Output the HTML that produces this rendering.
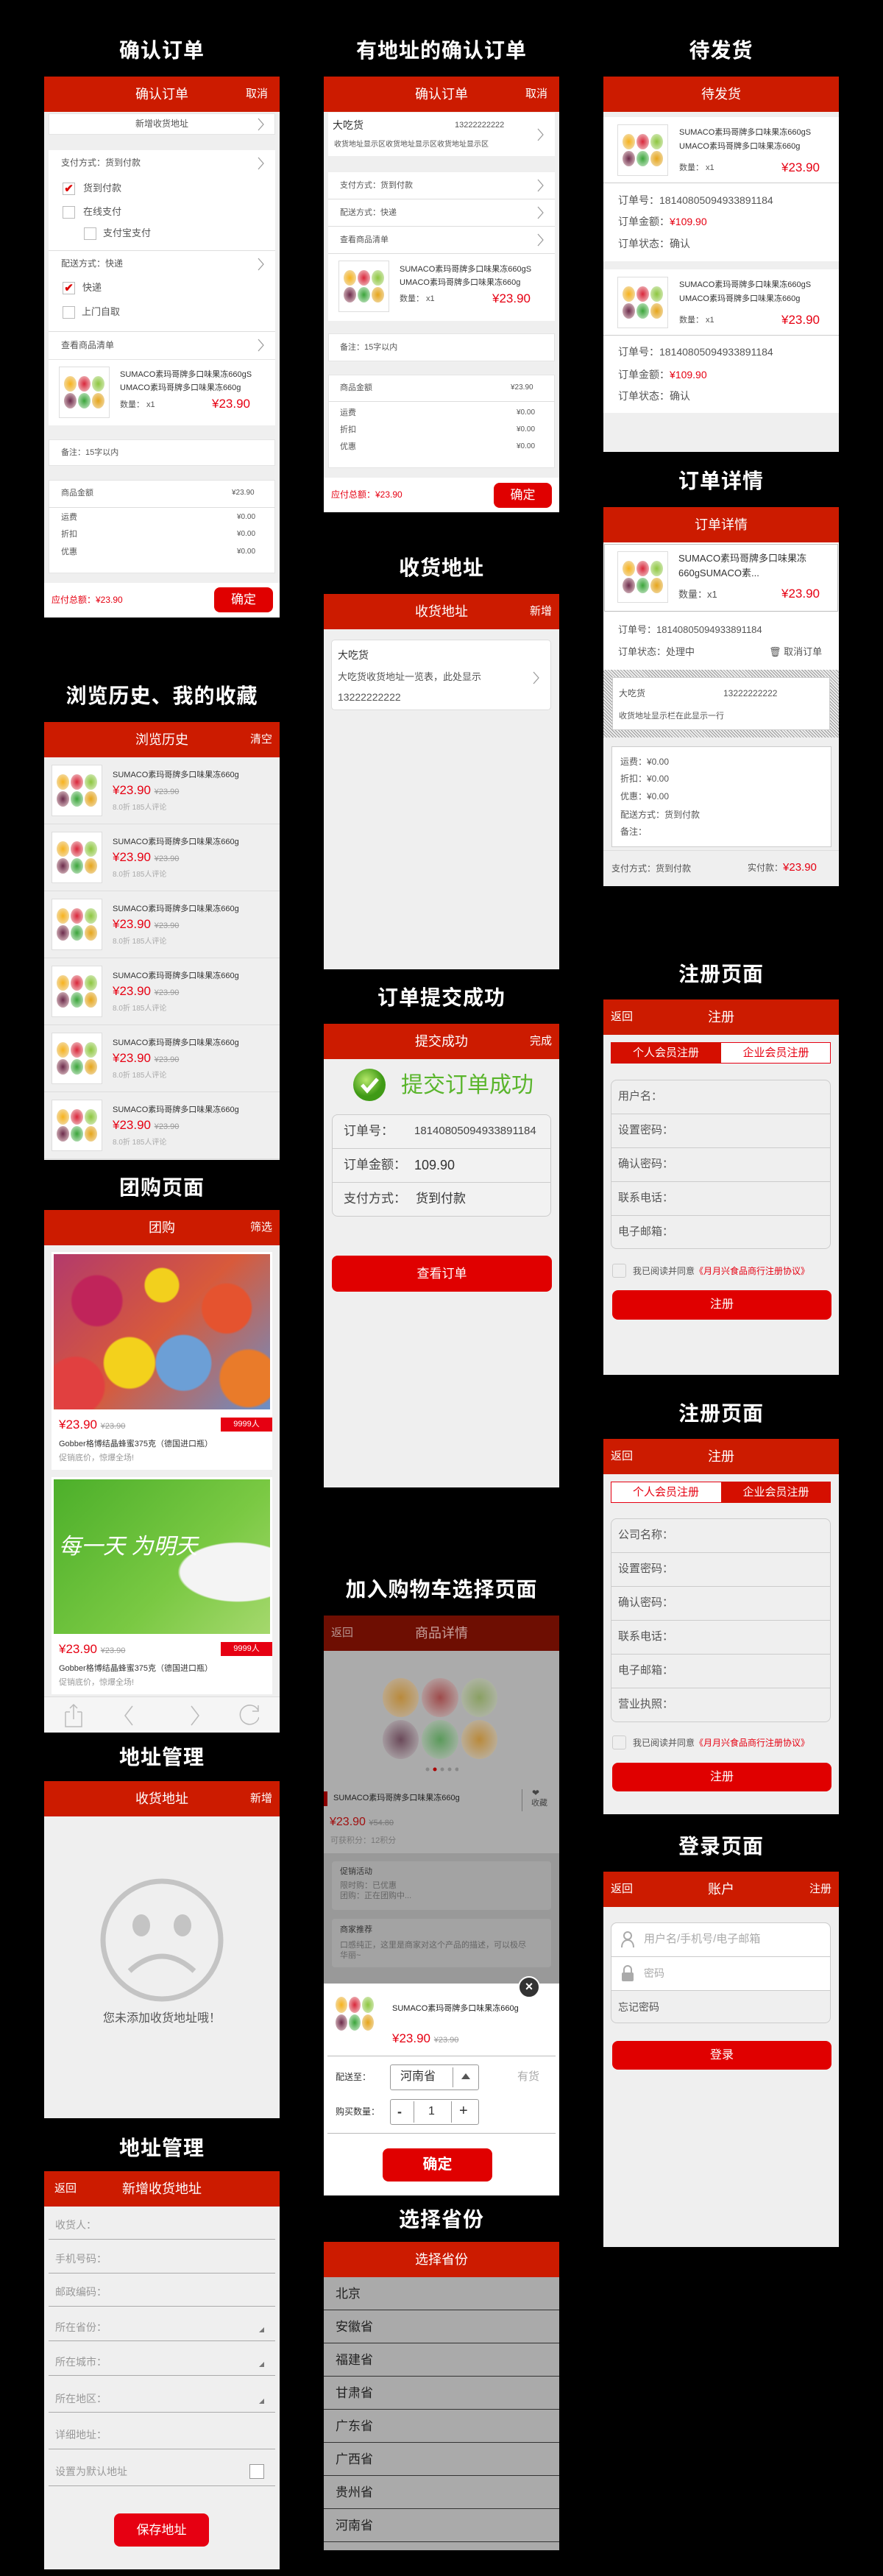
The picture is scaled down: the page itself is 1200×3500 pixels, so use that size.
<!DOCTYPE html>
<html><head><meta charset="utf-8">
<style>
*{margin:0;padding:0;box-sizing:border-box}
body{width:1200px;height:3500px;background:#000;position:relative;overflow:hidden;font-family:"Liberation Sans","Noto Sans CJK SC",sans-serif;color:#333}
.ti{position:absolute;width:360px;text-align:center;color:#fff;font-size:28px;font-weight:bold;line-height:36px;letter-spacing:1px}
.p{position:absolute;width:320px;background:#efefef;overflow:hidden}
.p>*{position:absolute}
.h{left:0;top:0;width:320px;height:48px;background:#cc1b00;color:#fff}
.h .c{position:absolute;left:0;width:320px;text-align:center;font-size:18px;line-height:48px}
.h .r{position:absolute;right:10px;font-size:15px;line-height:48px}
.h .l{position:absolute;left:10px;font-size:15px;line-height:48px}
.w{background:#fff}
.t{line-height:20px;white-space:nowrap;font-size:12px;color:#555}
.ar{width:9px;height:18px}
.cb{width:17px;height:17px;border:1px solid #bbb;background:#fff;color:#d00;font-size:15px;line-height:15px;text-align:center;font-weight:bold}
.th{width:69px;height:70px;background:#fff;border:1px solid #ddd;display:grid;grid-template-columns:repeat(3,1fr);padding:12px 6px;gap:2px}
.th i{border-radius:50%;display:block}
.th i:nth-child(1){background:radial-gradient(#f7b21c,#f1e5c8)}
.th i:nth-child(2){background:radial-gradient(#d9263a,#f3d8d8)}
.th i:nth-child(3){background:radial-gradient(#8dc63f,#e2f0d0)}
.th i:nth-child(4){background:radial-gradient(#6b2a4a,#eed7d7)}
.th i:nth-child(5){background:radial-gradient(#3aa43a,#d8eed8)}
.th i:nth-child(6){background:radial-gradient(#e6a51a,#f2e2be)}
.red{color:#e60012}
.btn{background:#e00000;color:#fff;text-align:center;border-radius:8px}
.ln{height:1px;background:#ddd}
.s{text-decoration:line-through;color:#999}
</style></head><body>

<div class="ti" style="left:40px;top:51px">确认订单</div>
<div class="ti" style="left:420px;top:51px">有地址的确认订单</div>
<div class="ti" style="left:800px;top:51px">待发货</div>
<div class="ti" style="left:800px;top:636px">订单详情</div>
<div class="ti" style="left:420px;top:754px">收货地址</div>
<div class="ti" style="left:40px;top:928px">浏览历史、我的收藏</div>
<div class="ti" style="left:800px;top:1306px">注册页面</div>
<div class="ti" style="left:420px;top:1338px">订单提交成功</div>
<div class="ti" style="left:40px;top:1596px">团购页面</div>
<div class="ti" style="left:800px;top:1903px">注册页面</div>
<div class="ti" style="left:420px;top:2142px">加入购物车选择页面</div>
<div class="ti" style="left:40px;top:2370px">地址管理</div>
<div class="ti" style="left:800px;top:2491px">登录页面</div>
<div class="ti" style="left:40px;top:2901px">地址管理</div>
<div class="ti" style="left:420px;top:2998px">选择省份</div>

<div class="p" style="left:60px;top:104px;height:735px">
 <div class="h"><div class="c">确认订单</div><div class="r" style="right:16px">取消</div></div>
 <div class="w" style="left:6px;top:50px;width:308px;height:29px;border:1px solid #e4e4e4"></div>
 <div class="t" style="left:0;width:320px;text-align:center;top:54px">新增收货地址</div>
 <svg class="ar" style="left:290px;top:56px"><path d="M1 1l7 8-7 8" fill="none" stroke="#999" stroke-width="1.2"/></svg>
 <div class="w" style="left:6px;top:100px;width:308px;height:290px"></div>
 <div class="t" style="left:23px;top:107px">支付方式：货到付款</div>
 <svg class="ar" style="left:290px;top:109px"><path d="M1 1l7 8-7 8" fill="none" stroke="#999" stroke-width="1.2"/></svg>
 <div class="cb" style="left:25px;top:144px">✔</div><div class="t" style="left:53px;top:142px;font-size:13px">货到付款</div>
 <div class="cb" style="left:25px;top:176px"></div><div class="t" style="left:53px;top:174px;font-size:13px">在线支付</div>
 <div class="cb" style="left:54px;top:205px"></div><div class="t" style="left:80px;top:203px;font-size:13px">支付宝支付</div>
 <div class="ln" style="left:6px;top:236px;width:308px"></div>
 <div class="t" style="left:23px;top:244px">配送方式：快递</div>
 <svg class="ar" style="left:290px;top:246px"><path d="M1 1l7 8-7 8" fill="none" stroke="#999" stroke-width="1.2"/></svg>
 <div class="cb" style="left:25px;top:279px">✔</div><div class="t" style="left:52px;top:277px;font-size:13px">快递</div>
 <div class="cb" style="left:25px;top:312px"></div><div class="t" style="left:51px;top:310px;font-size:13px">上门自取</div>
 <div class="ln" style="left:6px;top:346px;width:308px"></div>
 <div class="t" style="left:23px;top:355px">查看商品清单</div>
 <svg class="ar" style="left:290px;top:356px"><path d="M1 1l7 8-7 8" fill="none" stroke="#999" stroke-width="1.2"/></svg>
 <div class="w" style="left:6px;top:384px;width:308px;height:90px;border-top:1px solid #e4e4e4"></div>
 <div class="th" style="left:20px;top:394px"><i></i><i></i><i></i><i></i><i></i><i></i></div>
 <div class="t" style="left:103px;top:395px;font-size:11px;color:#333">SUMACO素玛哥牌多口味果冻660gS</div>
 <div class="t" style="left:103px;top:413px;font-size:11px;color:#333">UMACO素玛哥牌多口味果冻660g</div>
 <div class="t" style="left:103px;top:436px;font-size:11px">数量： x1</div>
 <div class="t red" style="left:228px;top:435px;font-size:17px">¥23.90</div>
 <div class="w" style="left:6px;top:493px;width:308px;height:36px;border:1px solid #e4e4e4"></div>
 <div class="t" style="left:23px;top:501px;font-size:11px">备注：15字以内</div>
 <div class="w" style="left:6px;top:548px;width:308px;height:127px;border:1px solid #e4e4e4"></div>
 <div class="t" style="left:23px;top:556px;font-size:11px">商品金额</div><div class="t" style="left:255px;top:556px;font-size:10px">¥23.90</div>
 <div class="ln" style="left:6px;top:585px;width:308px"></div>
 <div class="t" style="left:23px;top:589px;font-size:11px">运费</div><div class="t" style="left:262px;top:589px;font-size:10px">¥0.00</div>
 <div class="t" style="left:23px;top:612px;font-size:11px">折扣</div><div class="t" style="left:262px;top:612px;font-size:10px">¥0.00</div>
 <div class="t" style="left:23px;top:636px;font-size:11px">优惠</div><div class="t" style="left:262px;top:636px;font-size:10px">¥0.00</div>
 <div class="w" style="left:0;top:688px;width:320px;height:47px"></div>
 <div class="t red" style="left:10px;top:701px;font-size:12px">应付总额：¥23.90</div>
 <div class="btn" style="left:231px;top:694px;width:80px;height:34px;line-height:34px;font-size:17px">确定</div>
</div>

<div class="p" style="left:440px;top:104px;height:592px">
 <div class="h"><div class="c">确认订单</div><div class="r" style="right:16px">取消</div></div>
 <div class="w" style="left:6px;top:49px;width:308px;height:59px"></div>
 <div class="t" style="left:12px;top:56px;font-size:14px;color:#333">大吃货</div>
 <div class="t" style="left:178px;top:56px;font-size:11px">13222222222</div>
 <div class="t" style="left:14px;top:83px;font-size:10px">收货地址显示区收货地址显示区收货地址显示区</div>
 <svg class="ar" style="left:290px;top:70px"><path d="M1 1l7 8-7 8" fill="none" stroke="#999" stroke-width="1.2"/></svg>
 <div class="w" style="left:6px;top:130px;width:308px;height:202px"></div>
 <div class="t" style="left:22px;top:138px;font-size:11px">支付方式：货到付款</div>
 <svg class="ar" style="left:290px;top:139px"><path d="M1 1l7 8-7 8" fill="none" stroke="#999" stroke-width="1.2"/></svg>
 <div class="ln" style="left:6px;top:166px;width:308px"></div>
 <div class="t" style="left:22px;top:175px;font-size:11px">配送方式：快递</div>
 <svg class="ar" style="left:290px;top:176px"><path d="M1 1l7 8-7 8" fill="none" stroke="#999" stroke-width="1.2"/></svg>
 <div class="ln" style="left:6px;top:203px;width:308px"></div>
 <div class="t" style="left:22px;top:212px;font-size:11px">查看商品清单</div>
 <svg class="ar" style="left:290px;top:213px"><path d="M1 1l7 8-7 8" fill="none" stroke="#999" stroke-width="1.2"/></svg>
 <div class="ln" style="left:6px;top:240px;width:308px"></div>
 <div class="th" style="left:20px;top:250px"><i></i><i></i><i></i><i></i><i></i><i></i></div>
 <div class="t" style="left:103px;top:252px;font-size:11px;color:#333">SUMACO素玛哥牌多口味果冻660gS</div>
 <div class="t" style="left:103px;top:270px;font-size:11px;color:#333">UMACO素玛哥牌多口味果冻660g</div>
 <div class="t" style="left:103px;top:292px;font-size:11px">数量： x1</div>
 <div class="t red" style="left:229px;top:292px;font-size:17px">¥23.90</div>
 <div class="w" style="left:6px;top:349px;width:308px;height:38px;border:1px solid #e4e4e4"></div>
 <div class="t" style="left:22px;top:358px;font-size:11px">备注：15字以内</div>
 <div class="w" style="left:6px;top:405px;width:308px;height:127px;border:1px solid #e4e4e4"></div>
 <div class="t" style="left:22px;top:413px;font-size:11px">商品金额</div><div class="t" style="left:254px;top:413px;font-size:10px">¥23.90</div>
 <div class="ln" style="left:6px;top:441px;width:308px"></div>
 <div class="t" style="left:22px;top:447px;font-size:11px">运费</div><div class="t" style="left:262px;top:447px;font-size:10px">¥0.00</div>
 <div class="t" style="left:22px;top:470px;font-size:11px">折扣</div><div class="t" style="left:262px;top:470px;font-size:10px">¥0.00</div>
 <div class="t" style="left:22px;top:493px;font-size:11px">优惠</div><div class="t" style="left:262px;top:493px;font-size:10px">¥0.00</div>
 <div class="w" style="left:0;top:545px;width:320px;height:47px"></div>
 <div class="t red" style="left:10px;top:558px;font-size:12px">应付总额：¥23.90</div>
 <div class="btn" style="left:231px;top:552px;width:79px;height:34px;line-height:34px;font-size:17px">确定</div>
</div>

<div class="p" style="left:820px;top:104px;height:510px">
 <div class="h"><div class="c">待发货</div></div>
 <div class="w" style="left:0;top:55px;width:320px;height:196px"></div>
 <div class="th" style="left:19px;top:65px"><i></i><i></i><i></i><i></i><i></i><i></i></div>
 <div class="t" style="left:103px;top:66px;font-size:11px;color:#333">SUMACO素玛哥牌多口味果冻660gS</div>
 <div class="t" style="left:103px;top:85px;font-size:11px;color:#333">UMACO素玛哥牌多口味果冻660g</div>
 <div class="t" style="left:103px;top:114px;font-size:11px">数量： x1</div>
 <div class="t red" style="left:242px;top:114px;font-size:17px">¥23.90</div>
 <div class="ln" style="left:0;top:144px;width:320px;background:#ccc"></div>
 <div class="t" style="left:20px;top:158px;font-size:14px">订单号：18140805094933891184</div>
 <div class="t" style="left:20px;top:187px;font-size:14px">订单金额：<span class="red">¥109.90</span></div>
 <div class="t" style="left:20px;top:217px;font-size:14px">订单状态：确认</div>
 <div class="w" style="left:0;top:262px;width:320px;height:195px"></div>
 <div class="th" style="left:19px;top:272px"><i></i><i></i><i></i><i></i><i></i><i></i></div>
 <div class="t" style="left:103px;top:273px;font-size:11px;color:#333">SUMACO素玛哥牌多口味果冻660gS</div>
 <div class="t" style="left:103px;top:292px;font-size:11px;color:#333">UMACO素玛哥牌多口味果冻660g</div>
 <div class="t" style="left:103px;top:321px;font-size:11px">数量： x1</div>
 <div class="t red" style="left:242px;top:321px;font-size:17px">¥23.90</div>
 <div class="ln" style="left:0;top:351px;width:320px;background:#ccc"></div>
 <div class="t" style="left:20px;top:364px;font-size:14px">订单号：18140805094933891184</div>
 <div class="t" style="left:20px;top:395px;font-size:14px">订单金额：<span class="red">¥109.90</span></div>
 <div class="t" style="left:20px;top:424px;font-size:14px">订单状态：确认</div>
</div>

<div class="p" style="left:820px;top:689px;height:515px;background:#fff">
 <div class="h"><div class="c">订单详情</div></div>
 <div style="left:1px;top:50px;width:318px;height:92px;border:1px solid #bbb"></div>
 <div class="th" style="left:19px;top:60px"><i></i><i></i><i></i><i></i><i></i><i></i></div>
 <div class="t" style="left:102px;top:60px;font-size:13px;color:#333">SUMACO素玛哥牌多口味果冻</div>
 <div class="t" style="left:102px;top:80px;font-size:13px;color:#333">660gSUMACO素...</div>
 <div class="t" style="left:102px;top:109px;font-size:13px">数量：x1</div>
 <div class="t red" style="left:242px;top:108px;font-size:17px">¥23.90</div>
 <div class="t" style="left:20px;top:157px;font-size:13px">订单号：18140805094933891184</div>
 <div class="t" style="left:20px;top:187px;font-size:13px">订单状态：处理中</div>
 <div class="t" style="left:225px;top:187px;font-size:13px">🗑 取消订单</div>
 <div style="left:0;top:221px;width:320px;height:92px;background:repeating-linear-gradient(45deg,#999 0 1px,#eee 1px 3px)"></div>
 <div class="w" style="left:12px;top:231px;width:296px;height:72px;border:1px solid #ccc"></div>
 <div class="t" style="left:21px;top:243px;font-size:12px">大吃货</div>
 <div class="t" style="left:163px;top:243px;font-size:12px">13222222222</div>
 <div class="t" style="left:21px;top:274px;font-size:11px">收货地址显示栏在此显示一行</div>
 <div style="left:0;top:313px;width:320px;height:202px;background:#efefef"></div>
 <div class="w" style="left:11px;top:325px;width:299px;height:137px;border:1px solid #ccc"></div>
 <div class="t" style="left:23px;top:336px;font-size:12px">运费：¥0.00</div>
 <div class="t" style="left:23px;top:359px;font-size:12px">折扣：¥0.00</div>
 <div class="t" style="left:23px;top:383px;font-size:12px">优惠：¥0.00</div>
 <div class="t" style="left:23px;top:408px;font-size:12px">配送方式：货到付款</div>
 <div class="t" style="left:23px;top:431px;font-size:12px">备注：</div>
 <div class="ln" style="left:0;top:466px;width:320px"></div>
 <div class="t" style="left:11px;top:481px;font-size:12px">支付方式：货到付款</div>
 <div class="t" style="left:196px;top:480px;font-size:12px">实付款：<span class="red" style="font-size:15px">¥23.90</span></div>
</div>

<div class="p" style="left:440px;top:807px;height:510px">
 <div class="h"><div class="c">收货地址</div><div class="r">新增</div></div>
 <div class="w" style="left:10px;top:62px;width:299px;height:96px;border:1px solid #ddd;border-radius:5px"></div>
 <div class="t" style="left:19px;top:73px;font-size:14px;color:#333">大吃货</div>
 <div class="t" style="left:19px;top:103px;font-size:13px">大吃货收货地址一览表，此处显示</div>
 <div class="t" style="left:19px;top:130px;font-size:14px">13222222222</div>
 <svg class="ar" style="left:284px;top:105px"><path d="M1 1l7 8-7 8" fill="none" stroke="#999" stroke-width="1.2"/></svg>
</div>

<div class="p" style="left:60px;top:981px;height:595px">
 <div class="h"><div class="c">浏览历史</div><div class="r">清空</div></div>
</div>

<div class="p" style="left:60px;top:1644px;height:710px">
 <div class="h"><div class="c">团购</div><div class="r">筛选</div></div>
 <div class="w" style="left:10px;top:57px;width:300px;height:296px"></div>
 <div style="left:13px;top:60px;width:294px;height:211px;background:radial-gradient(circle at 20% 30%,#c0245a 0 12%,transparent 13%),radial-gradient(circle at 50% 20%,#f2d01d 0 10%,transparent 11%),radial-gradient(circle at 80% 35%,#e5532f 0 12%,transparent 13%),radial-gradient(circle at 35% 70%,#f3d11c 0 14%,transparent 15%),radial-gradient(circle at 60% 70%,#6c9fd6 0 16%,transparent 17%),radial-gradient(circle at 90% 80%,#e97b2a 0 12%,transparent 13%),radial-gradient(circle at 10% 85%,#e14040 0 12%,transparent 13%),linear-gradient(135deg,#b33a6b,#d85a3b 50%,#6a8fc7)"></div>
 <div class="t red" style="left:20px;top:282px;font-size:17px">¥23.90 <span class="s" style="font-size:11px">¥23.90</span></div>
 <div style="left:240px;top:282px;width:70px;height:19px;background:#e60012;color:#fff;font-size:11px;line-height:19px;text-align:center">9999人</div>
 <div class="t" style="left:20px;top:308px;font-size:11px;color:#333">Gobber格博结晶蜂蜜375克（德国进口瓶）</div>
 <div class="t" style="left:20px;top:327px;font-size:11px;color:#999">促销底价，惊爆全场!</div>
 <div class="w" style="left:10px;top:363px;width:300px;height:295px"></div>
 <div style="left:13px;top:366px;width:294px;height:210px;background:radial-gradient(ellipse at 85% 60%,#f4f4f4 0 22%,transparent 23%),linear-gradient(135deg,#4caf2a,#7ac943 60%,#a5d86d)"></div>
 <div class="t" style="left:20px;top:440px;font-size:30px;color:#fff;line-height:36px;font-style:italic">每一天 为明天</div>
 <div class="t red" style="left:20px;top:587px;font-size:17px">¥23.90 <span class="s" style="font-size:11px">¥23.90</span></div>
 <div style="left:240px;top:587px;width:70px;height:19px;background:#e60012;color:#fff;font-size:11px;line-height:19px;text-align:center">9999人</div>
 <div class="t" style="left:20px;top:613px;font-size:11px;color:#333">Gobber格博结晶蜂蜜375克（德国进口瓶）</div>
 <div class="t" style="left:20px;top:632px;font-size:11px;color:#999">促销底价，惊爆全场!</div>
 <div style="left:0;top:661px;width:320px;height:49px;background:#f5f5f5;border-top:1px solid #ddd"></div>
 <svg style="left:28px;top:670px" width="264" height="34"><g fill="none" stroke="#bbb" stroke-width="1.5"><path d="M1 12h6M17 12h6M1 12v20h22V12M12 2v20M7 7l5-5 5 5"/><path d="M92 4l-10 13 10 13"/><path d="M172 4l10 13-10 13"/><path d="M263 10a13 13 0 1 0 1 9M263 3v8h-8"/></g></svg>
</div>

<div class="p" style="left:60px;top:2420px;height:458px">
 <div class="h"><div class="c">收货地址</div><div class="r">新增</div></div>
 <svg style="left:74px;top:130px" width="172" height="172"><circle cx="86" cy="86" r="80" fill="none" stroke="#c4c4c4" stroke-width="7"/><ellipse cx="58" cy="66" rx="12" ry="15" fill="#c4c4c4"/><ellipse cx="114" cy="66" rx="12" ry="15" fill="#c4c4c4"/><path d="M42 128q44-40 88 0" fill="none" stroke="#c4c4c4" stroke-width="7"/></svg>
 <div class="t" style="left:0;width:320px;text-align:center;top:312px;font-size:16px;line-height:22px">您未添加收货地址哦！</div>
</div>

<div class="p" style="left:60px;top:2950px;height:541px">
 <div class="h" style="height:48px"><div class="l" style="left:14px">返回</div><div class="c">新增收货地址</div></div>
 <div class="t" style="left:15px;top:63px;font-size:14px;color:#999">收货人：</div>
 <div class="ln" style="left:6px;top:92px;width:308px;background:#aaa"></div>
 <div class="t" style="left:15px;top:109px;font-size:14px;color:#999">手机号码：</div>
 <div class="ln" style="left:6px;top:138px;width:308px;background:#aaa"></div>
 <div class="t" style="left:15px;top:154px;font-size:14px;color:#999">邮政编码：</div>
 <div class="ln" style="left:6px;top:183px;width:308px;background:#aaa"></div>
 <div class="t" style="left:15px;top:202px;font-size:14px;color:#999">所在省份：</div>
 <div style="left:292px;top:212px;width:0;height:0;border-left:7px solid transparent;border-bottom:7px solid #777"></div>
 <div class="ln" style="left:6px;top:230px;width:308px;background:#aaa"></div>
 <div class="t" style="left:15px;top:249px;font-size:14px;color:#999">所在城市：</div>
 <div style="left:292px;top:259px;width:0;height:0;border-left:7px solid transparent;border-bottom:7px solid #777"></div>
 <div class="ln" style="left:6px;top:277px;width:308px;background:#aaa"></div>
 <div class="t" style="left:15px;top:299px;font-size:14px;color:#999">所在地区：</div>
 <div style="left:292px;top:309px;width:0;height:0;border-left:7px solid transparent;border-bottom:7px solid #777"></div>
 <div class="ln" style="left:6px;top:327px;width:308px;background:#aaa"></div>
 <div class="t" style="left:15px;top:348px;font-size:14px;color:#999">详细地址：</div>
 <div class="ln" style="left:6px;top:377px;width:308px;background:#aaa"></div>
 <div class="t" style="left:15px;top:398px;font-size:14px;color:#999">设置为默认地址</div>
 <div style="left:279px;top:398px;width:20px;height:20px;border:1px solid #999;background:#fff"></div>
 <div class="ln" style="left:6px;top:427px;width:308px;background:#aaa"></div>
 <div class="btn" style="left:95px;top:465px;width:129px;height:45px;line-height:45px;font-size:17px;background:#e60012">保存地址</div>
</div>

<div class="p" style="left:440px;top:1391px;height:630px">
 <div class="h"><div class="c">提交成功</div><div class="r">完成</div></div>
 <svg style="left:39px;top:60px" width="46" height="46"><defs><radialGradient id="g1" cx="40%" cy="35%"><stop offset="0" stop-color="#b6e86a"/><stop offset="1" stop-color="#3f9a16"/></radialGradient></defs><circle cx="23" cy="23" r="22" fill="url(#g1)"/><path d="M13 23l7 8 14-16" fill="none" stroke="#fff" stroke-width="5"/></svg>
 <div class="t" style="left:105px;top:66px;font-size:30px;line-height:36px;color:#5ab52c">提交订单成功</div>
 <div class="w" style="left:11px;top:123px;width:298px;height:139px;border:1px solid #ccc;border-radius:8px;background:#f2f2f2"></div>
 <div class="ln" style="left:11px;top:169px;width:298px;background:#ccc"></div>
 <div class="ln" style="left:11px;top:215px;width:298px;background:#ccc"></div>
 <div class="t" style="left:27px;top:136px;font-size:17px;color:#444">订单号：</div><div class="t" style="left:123px;top:136px;font-size:15px;color:#444">18140805094933891184</div>
 <div class="t" style="left:27px;top:182px;font-size:17px;color:#444">订单金额：</div><div class="t" style="left:123px;top:182px;font-size:18px;color:#333">109.90</div>
 <div class="t" style="left:27px;top:228px;font-size:17px;color:#444">支付方式：</div><div class="t" style="left:125px;top:228px;font-size:17px;color:#333">货到付款</div>
 <div class="btn" style="left:11px;top:315px;width:299px;height:49px;line-height:49px;font-size:17px">查看订单</div>
</div>

<div class="p" style="left:440px;top:2195px;height:788px;background:#999">
 <div class="h" style="background:#6e0e02"><div class="l" style="color:#b89590;font-size:15px">返回</div><div class="c" style="color:#c9a39e;font-size:18px">商品详情</div></div>
 <div style="left:0;top:48px;width:320px;height:275px;background:#ababab"></div>
 <div style="left:80px;top:85px;width:156px;height:110px;display:grid;grid-template-columns:repeat(3,1fr);gap:4px">
  <i style="border-radius:50%;background:radial-gradient(#b98a3c,#bdb4aa)"></i><i style="border-radius:50%;background:radial-gradient(#9e4b4b,#bbb)"></i><i style="border-radius:50%;background:radial-gradient(#8aa063,#bbb)"></i><i style="border-radius:50%;background:radial-gradient(#6b4a5a,#bbb)"></i><i style="border-radius:50%;background:radial-gradient(#5b9a5b,#bbb)"></i><i style="border-radius:50%;background:radial-gradient(#b98a3c,#bbb)"></i></div>
 <svg style="left:137px;top:205px" width="46" height="8"><g fill="#888"><circle cx="4" cy="4" r="2.5"/><circle cx="24" cy="4" r="2.5"/><circle cx="34" cy="4" r="2.5"/><circle cx="44" cy="4" r="2.5"/></g><circle cx="14" cy="4" r="2.5" fill="#a00"/></svg>
 <div style="left:0;top:239px;width:5px;height:20px;background:#8a0000"></div>
 <div class="t" style="left:13px;top:238px;font-size:11px;color:#222">SUMACO素玛哥牌多口味果冻660g</div>
 <div style="left:269px;top:236px;width:1px;height:30px;background:#777"></div>
 <div class="t" style="left:283px;top:231px;font-size:12px;color:#444">❤</div>
 <div class="t" style="left:282px;top:245px;font-size:11px;color:#444">收藏</div>
 <div class="t" style="left:8px;top:271px;font-size:16px;color:#a01010">¥23.90 <span class="s" style="font-size:11px;color:#777">¥54.80</span></div>
 <div class="t" style="left:9px;top:296px;font-size:11px;color:#777">可获积分：12积分</div>
 <div style="left:11px;top:334px;width:298px;height:66px;background:#a3a3a3;border-radius:4px"></div>
 <div class="t" style="left:22px;top:338px;font-size:11px;color:#333">促销活动</div>
 <div class="t" style="left:22px;top:360px;font-size:11px;color:#666;line-height:14px">限时购：已优惠<br>团购：正在团购中...</div>
 <div style="left:11px;top:412px;width:298px;height:66px;background:#a3a3a3;border-radius:4px"></div>
 <div class="t" style="left:22px;top:417px;font-size:11px;color:#333">商家推荐</div>
 <div class="t" style="left:22px;top:441px;font-size:11px;color:#666;line-height:14px">口感纯正，这里是商家对这个产品的描述，可以极尽<br>华丽~</div>
 <div class="w" style="left:0;top:500px;width:320px;height:288px"></div>
 <div style="left:264px;top:490px;width:30px;height:30px;border-radius:50%;background:#333;border:2px solid #fff;color:#fff;text-align:center;line-height:25px;font-size:18px;font-weight:bold">×</div>
 <div class="th" style="left:12px;top:510px;border:none;width:60px;height:62px;padding:8px 4px"><i></i><i></i><i></i><i></i><i></i><i></i></div>
 <div class="t" style="left:93px;top:524px;font-size:11px;color:#222">SUMACO素玛哥牌多口味果冻660g</div>
 <div class="t red" style="left:93px;top:565px;font-size:17px">¥23.90 <span class="s" style="font-size:11px">¥23.90</span></div>
 <div class="ln" style="left:5px;top:598px;width:310px;background:#bbb"></div>
 <div class="t" style="left:16px;top:617px;font-size:12px;color:#333">配送至：</div>
 <div class="w" style="left:90px;top:610px;width:121px;height:35px;border:1px solid #999;border-radius:3px"></div>
 <div class="t" style="left:104px;top:617px;font-size:16px;color:#333">河南省</div>
 <div style="left:175px;top:614px;width:1px;height:27px;background:#999"></div>
 <div style="left:187px;top:622px;width:0;height:0;border-left:6px solid transparent;border-right:6px solid transparent;border-bottom:8px solid #555"></div>
 <div class="t" style="left:263px;top:617px;font-size:15px;color:#aaa">有货</div>
 <div class="t" style="left:16px;top:664px;font-size:12px;color:#333">购买数量：</div>
 <div class="w" style="left:90px;top:657px;width:121px;height:35px;border:1px solid #999;border-radius:3px"></div>
 <div style="left:122px;top:660px;width:1px;height:29px;background:#999"></div>
 <div style="left:173px;top:660px;width:1px;height:29px;background:#999"></div>
 <div class="t" style="left:100px;top:664px;font-size:18px;font-weight:bold;color:#333">-</div>
 <div class="t" style="left:142px;top:664px;font-size:16px;color:#333">1</div>
 <div class="t" style="left:184px;top:663px;font-size:20px;color:#333">+</div>
 <div class="ln" style="left:5px;top:703px;width:310px;background:#bbb"></div>
 <div class="btn" style="left:80px;top:724px;width:149px;height:45px;line-height:45px;font-size:20px;font-weight:bold">确定</div>
</div>

<div class="p" style="left:440px;top:3046px;height:419px;background:#aaa">
 <div class="h"><div class="c">选择省份</div></div>
 <div style="left:0;top:48px;width:320px;font-size:17px;color:#222">
  <div style="height:45px;line-height:45px;padding-left:16px;border-bottom:1px solid #333">北京</div>
  <div style="height:45px;line-height:45px;padding-left:16px;border-bottom:1px solid #333">安徽省</div>
  <div style="height:45px;line-height:45px;padding-left:16px;border-bottom:1px solid #333">福建省</div>
  <div style="height:45px;line-height:45px;padding-left:16px;border-bottom:1px solid #333">甘肃省</div>
  <div style="height:45px;line-height:45px;padding-left:16px;border-bottom:1px solid #333">广东省</div>
  <div style="height:45px;line-height:45px;padding-left:16px;border-bottom:1px solid #333">广西省</div>
  <div style="height:45px;line-height:45px;padding-left:16px;border-bottom:1px solid #333">贵州省</div>
  <div style="height:45px;line-height:45px;padding-left:16px;border-bottom:1px solid #333">河南省</div>
 </div>
</div>

<div class="p" style="left:820px;top:1358px;height:510px">
 <div class="h"><div class="l">返回</div><div class="c">注册</div></div>
 <div style="left:10px;top:58px;width:299px;height:29px;border:1px solid #e60012;background:#fff"></div>
 <div style="left:10px;top:58px;width:150px;height:29px;background:#d50f00;color:#fff;text-align:center;line-height:29px;font-size:15px">个人会员注册</div>
 <div style="left:160px;top:58px;width:149px;height:29px;color:#e60012;text-align:center;line-height:29px;font-size:15px">企业会员注册</div>
 <div style="left:10px;top:109px;width:299px;height:230px;border:1px solid #ccc;border-radius:8px"></div>
 <div class="ln" style="left:10px;top:155px;width:299px;background:#ccc"></div>
 <div class="ln" style="left:10px;top:201px;width:299px;background:#ccc"></div>
 <div class="ln" style="left:10px;top:247px;width:299px;background:#ccc"></div>
 <div class="ln" style="left:10px;top:293px;width:299px;background:#ccc"></div>
 <div class="t" style="left:20px;top:122px;font-size:15px">用户名：</div>
 <div class="t" style="left:20px;top:168px;font-size:15px">设置密码：</div>
 <div class="t" style="left:20px;top:214px;font-size:15px">确认密码：</div>
 <div class="t" style="left:20px;top:260px;font-size:15px">联系电话：</div>
 <div class="t" style="left:20px;top:306px;font-size:15px">电子邮箱：</div>
 <div style="left:12px;top:359px;width:19px;height:19px;border:1px solid #ccc;border-radius:3px"></div>
 <div class="t" style="left:40px;top:359px;font-size:12px">我已阅读并同意<span class="red">《月月兴食品商行注册协议》</span></div>
 <div class="btn" style="left:12px;top:395px;width:298px;height:40px;line-height:40px;font-size:16px">注册</div>
</div>

<div class="p" style="left:820px;top:1955px;height:510px">
 <div class="h"><div class="l">返回</div><div class="c">注册</div></div>
 <div style="left:10px;top:58px;width:299px;height:29px;border:1px solid #e60012;background:#fff"></div>
 <div style="left:10px;top:58px;width:150px;height:29px;color:#e60012;text-align:center;line-height:29px;font-size:15px">个人会员注册</div>
 <div style="left:160px;top:58px;width:149px;height:29px;background:#d50f00;color:#fff;text-align:center;line-height:29px;font-size:15px">企业会员注册</div>
 <div style="left:10px;top:108px;width:299px;height:277px;border:1px solid #ccc;border-radius:8px"></div>
 <div class="ln" style="left:10px;top:154px;width:299px;background:#ccc"></div>
 <div class="ln" style="left:10px;top:200px;width:299px;background:#ccc"></div>
 <div class="ln" style="left:10px;top:246px;width:299px;background:#ccc"></div>
 <div class="ln" style="left:10px;top:292px;width:299px;background:#ccc"></div>
 <div class="ln" style="left:10px;top:338px;width:299px;background:#ccc"></div>
 <div class="t" style="left:20px;top:121px;font-size:15px">公司名称：</div>
 <div class="t" style="left:20px;top:167px;font-size:15px">设置密码：</div>
 <div class="t" style="left:20px;top:213px;font-size:15px">确认密码：</div>
 <div class="t" style="left:20px;top:259px;font-size:15px">联系电话：</div>
 <div class="t" style="left:20px;top:305px;font-size:15px">电子邮箱：</div>
 <div class="t" style="left:20px;top:351px;font-size:15px">营业执照：</div>
 <div style="left:12px;top:403px;width:19px;height:19px;border:1px solid #ccc;border-radius:3px"></div>
 <div class="t" style="left:40px;top:403px;font-size:12px">我已阅读并同意<span class="red">《月月兴食品商行注册协议》</span></div>
 <div class="btn" style="left:12px;top:440px;width:298px;height:39px;line-height:39px;font-size:16px">注册</div>
</div>

<div class="p" style="left:820px;top:2543px;height:510px">
 <div class="h"><div class="l">返回</div><div class="c">账户</div><div class="r">注册</div></div>
 <div style="left:10px;top:69px;width:299px;height:137px;border:1px solid #ccc;border-radius:8px"></div>
 <div class="w" style="left:11px;top:70px;width:297px;height:45px;border-radius:8px 8px 0 0"></div>
 <div class="w" style="left:11px;top:115px;width:297px;height:46px"></div>
 <div class="ln" style="left:10px;top:115px;width:299px;background:#ccc"></div>
 <div class="ln" style="left:10px;top:161px;width:299px;background:#ccc"></div>
 <svg style="left:24px;top:80px" width="18" height="24"><circle cx="9" cy="7" r="5" fill="none" stroke="#aaa" stroke-width="2"/><path d="M1 23c0-7 4-10 8-10s8 3 8 10" fill="none" stroke="#aaa" stroke-width="2"/></svg>
 <div class="t" style="left:55px;top:82px;font-size:15px;color:#aaa">用户名/手机号/电子邮箱</div>
 <svg style="left:24px;top:126px" width="18" height="24"><path d="M4 11V7a5 5 0 0 1 10 0v4" fill="none" stroke="#aaa" stroke-width="2"/><rect x="1" y="11" width="16" height="12" rx="2" fill="#aaa"/></svg>
 <div class="t" style="left:55px;top:128px;font-size:14px;color:#aaa">密码</div>
 <div class="t" style="left:20px;top:174px;font-size:14px">忘记密码</div>
 <div class="btn" style="left:12px;top:230px;width:298px;height:39px;line-height:39px;font-size:16px">登录</div>
</div>

<div style="position:absolute;left:60px;top:1029px;width:320px">
<div style="position:relative;height:91px;border-bottom:1px solid #ddd"><div class="th" style="position:absolute;left:10px;top:10px"><i></i><i></i><i></i><i></i><i></i><i></i></div><div class="t" style="position:absolute;left:93px;top:14px;font-size:11px;color:#333">SUMACO素玛哥牌多口味果冻660g</div><div class="t red" style="position:absolute;left:93px;top:35px;font-size:17px">¥23.90 <span class="s" style="font-size:11px">¥23.90</span></div><div class="t" style="position:absolute;left:93px;top:59px;font-size:10px;color:#aaa">8.0折 185人评论</div></div>
<div style="position:relative;height:91px;border-bottom:1px solid #ddd"><div class="th" style="position:absolute;left:10px;top:10px"><i></i><i></i><i></i><i></i><i></i><i></i></div><div class="t" style="position:absolute;left:93px;top:14px;font-size:11px;color:#333">SUMACO素玛哥牌多口味果冻660g</div><div class="t red" style="position:absolute;left:93px;top:35px;font-size:17px">¥23.90 <span class="s" style="font-size:11px">¥23.90</span></div><div class="t" style="position:absolute;left:93px;top:59px;font-size:10px;color:#aaa">8.0折 185人评论</div></div>
<div style="position:relative;height:91px;border-bottom:1px solid #ddd"><div class="th" style="position:absolute;left:10px;top:10px"><i></i><i></i><i></i><i></i><i></i><i></i></div><div class="t" style="position:absolute;left:93px;top:14px;font-size:11px;color:#333">SUMACO素玛哥牌多口味果冻660g</div><div class="t red" style="position:absolute;left:93px;top:35px;font-size:17px">¥23.90 <span class="s" style="font-size:11px">¥23.90</span></div><div class="t" style="position:absolute;left:93px;top:59px;font-size:10px;color:#aaa">8.0折 185人评论</div></div>
<div style="position:relative;height:91px;border-bottom:1px solid #ddd"><div class="th" style="position:absolute;left:10px;top:10px"><i></i><i></i><i></i><i></i><i></i><i></i></div><div class="t" style="position:absolute;left:93px;top:14px;font-size:11px;color:#333">SUMACO素玛哥牌多口味果冻660g</div><div class="t red" style="position:absolute;left:93px;top:35px;font-size:17px">¥23.90 <span class="s" style="font-size:11px">¥23.90</span></div><div class="t" style="position:absolute;left:93px;top:59px;font-size:10px;color:#aaa">8.0折 185人评论</div></div>
<div style="position:relative;height:91px;border-bottom:1px solid #ddd"><div class="th" style="position:absolute;left:10px;top:10px"><i></i><i></i><i></i><i></i><i></i><i></i></div><div class="t" style="position:absolute;left:93px;top:14px;font-size:11px;color:#333">SUMACO素玛哥牌多口味果冻660g</div><div class="t red" style="position:absolute;left:93px;top:35px;font-size:17px">¥23.90 <span class="s" style="font-size:11px">¥23.90</span></div><div class="t" style="position:absolute;left:93px;top:59px;font-size:10px;color:#aaa">8.0折 185人评论</div></div>
<div style="position:relative;height:91px;border-bottom:1px solid #ddd"><div class="th" style="position:absolute;left:10px;top:10px"><i></i><i></i><i></i><i></i><i></i><i></i></div><div class="t" style="position:absolute;left:93px;top:14px;font-size:11px;color:#333">SUMACO素玛哥牌多口味果冻660g</div><div class="t red" style="position:absolute;left:93px;top:35px;font-size:17px">¥23.90 <span class="s" style="font-size:11px">¥23.90</span></div><div class="t" style="position:absolute;left:93px;top:59px;font-size:10px;color:#aaa">8.0折 185人评论</div></div>
</div>

</body></html>
